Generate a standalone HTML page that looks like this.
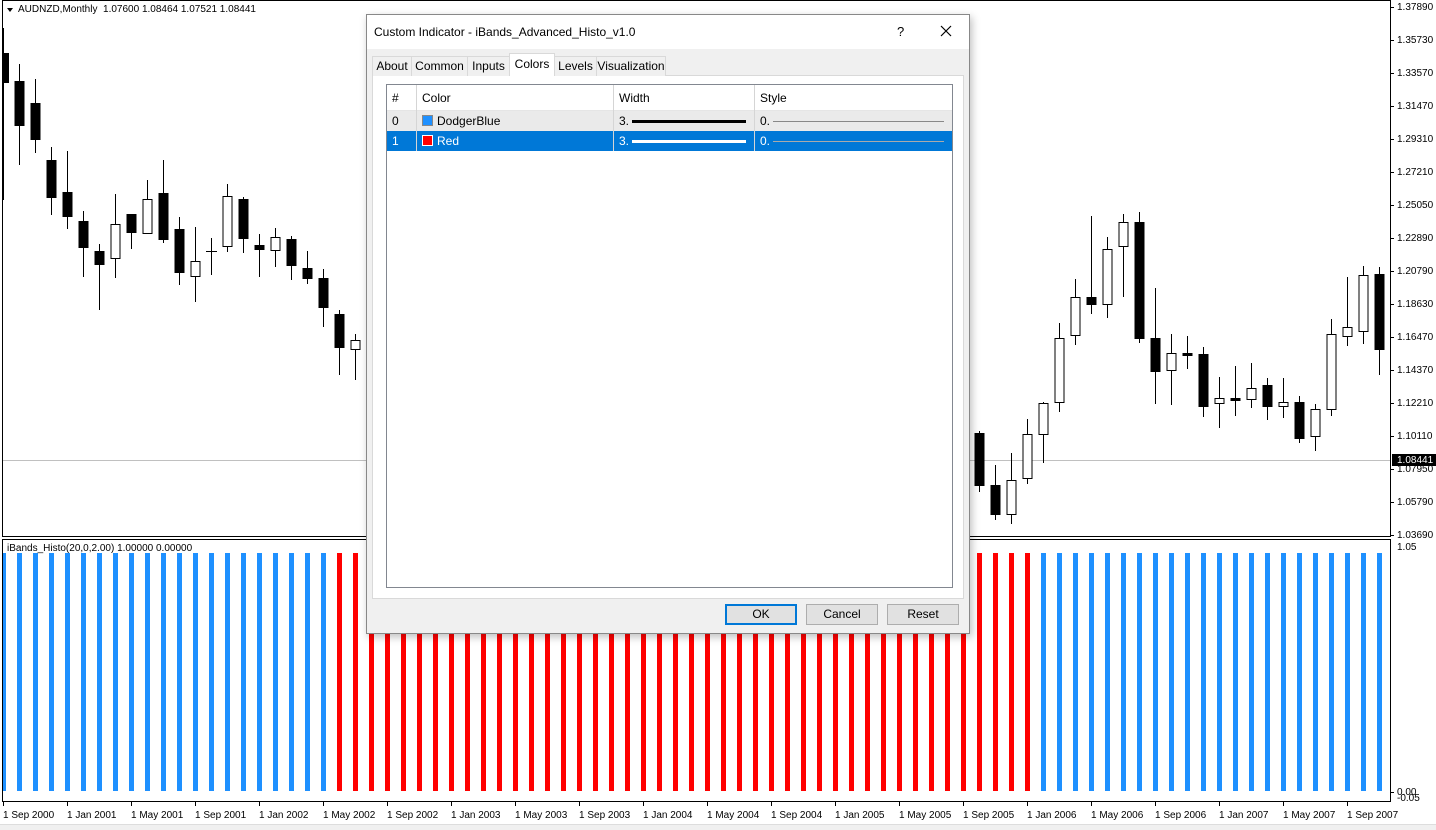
<!DOCTYPE html>
<html><head><meta charset="utf-8"><style>
*{margin:0;padding:0;box-sizing:border-box}
body{width:1436px;height:830px;background:#fff;position:relative;overflow:hidden;font-family:"Liberation Sans",sans-serif;font-size:11px;color:#000}
.ax{position:absolute;left:1397px;font-size:10px;line-height:11px}
.dt{position:absolute;top:810px;font-size:10px;white-space:nowrap}
#dlg{position:absolute;left:366px;top:14px;width:604px;height:620px;background:#f0f0f0;border:1px solid #888;box-shadow:2px 3px 8px rgba(0,0,0,.25);font-size:12px}
#title{position:absolute;left:0;top:0;width:602px;height:34px;background:#fff}
.tab{position:absolute;top:41px;height:20px;border:1px solid #d9d9d9;border-bottom:none;background:#f0f0f0;line-height:19px;text-align:center;font-size:12px;white-space:nowrap;overflow:hidden}
.row{position:absolute;left:0;width:565px;height:20px;line-height:20px}
.cell{position:absolute;top:0;height:20px;padding-left:5px;border-right:1px solid #d5d5d5}
.btn{position:absolute;top:589px;width:72px;height:21px;border:1px solid #adadad;background:#e1e1e1;text-align:center;line-height:19px}
</style></head><body>
<svg width="1436" height="830" style="position:absolute;left:0;top:0">
<defs>
<pattern id="pb" patternUnits="userSpaceOnUse" width="16" height="400"><rect x="1" y="0" width="5" height="400" fill="#1e90ff"/></pattern>
<pattern id="pr" patternUnits="userSpaceOnUse" width="16" height="400"><rect x="1" y="0" width="5" height="400" fill="#ff0000"/></pattern>
</defs>
<rect x="2.5" y="0.5" width="1388" height="536" fill="none" stroke="#000"/>
<rect x="2.5" y="539.5" width="1388" height="262" fill="none" stroke="#000"/>
<line x1="3" y1="460.5" x2="1390" y2="460.5" stroke="#c0c0c0"/>
<rect x="3" y="553" width="333" height="238" fill="url(#pb)"/>
<rect x="336" y="553" width="704" height="238" fill="url(#pr)"/>
<rect x="1040" y="553" width="350" height="238" fill="url(#pb)"/>
<rect x="2" y="28" width="2" height="172" fill="#000"/>
<rect x="3" y="53" width="6" height="30" fill="#000"/>
<path stroke="#000" stroke-width="1" fill="none" d="M19.5 64V165M35.5 79V153M51.5 147V215M67.5 151V229M83.5 211V277M99.5 244V310M115.5 194V278M131.5 214V249M147.5 180V234M163.5 160V243M179.5 217V285M195.5 227V302M211.5 238V275M227.5 184V252M243.5 197V253M259.5 234V277M275.5 228V267M291.5 236V280M307.5 251V284M323.5 269V327M339.5 310V375M355.5 334V380M979.5 431V492M995.5 465V520M1011.5 453V524M1027.5 419V484M1043.5 402V463M1059.5 323V412M1075.5 279V345M1091.5 216V314M1107.5 237V318M1123.5 214V297M1139.5 212V343M1155.5 288V404M1171.5 334V405M1187.5 336V369M1203.5 347V417M1219.5 377V428M1235.5 366V416M1251.5 363V408M1267.5 378V420M1283.5 378V418M1299.5 396V443M1315.5 404V451M1331.5 319V416M1347.5 277V346M1363.5 266V344M1379.5 267V375M206 251.5H217"/>
<g fill="#000">
<rect x="14.5" y="81" width="10" height="45"/><rect x="30.5" y="103" width="10" height="37"/><rect x="46.5" y="160" width="10" height="38"/><rect x="62.5" y="192" width="10" height="25"/><rect x="78.5" y="221" width="10" height="27"/><rect x="94.5" y="251" width="10" height="14"/><rect x="126.5" y="214" width="10" height="19"/><rect x="158.5" y="193" width="10" height="47"/><rect x="174.5" y="229" width="10" height="44"/><rect x="238.5" y="199" width="10" height="40"/><rect x="254.5" y="245" width="10" height="5"/><rect x="286.5" y="239" width="10" height="27"/><rect x="302.5" y="268" width="10" height="11"/><rect x="318.5" y="278" width="10" height="30"/><rect x="334.5" y="314" width="10" height="34"/>
<rect x="974.5" y="433" width="10" height="53"/><rect x="990.5" y="485" width="10" height="30"/><rect x="1086.5" y="297" width="10" height="8"/><rect x="1134.5" y="222" width="10" height="117"/><rect x="1150.5" y="338" width="10" height="34"/><rect x="1182.5" y="353" width="10" height="3"/><rect x="1198.5" y="354" width="10" height="53"/><rect x="1230.5" y="398" width="10" height="3"/><rect x="1262.5" y="385" width="10" height="22"/><rect x="1294.5" y="402" width="10" height="37"/><rect x="1374.5" y="274" width="10" height="76"/>
</g>
<g fill="#fff" stroke="#000" stroke-width="1">
<rect x="111" y="224.5" width="9" height="34"/><rect x="143" y="199.5" width="9" height="34"/><rect x="191" y="261.5" width="9" height="15"/><rect x="223" y="196.5" width="9" height="50"/><rect x="271" y="237.5" width="9" height="13"/><rect x="351" y="340.5" width="9" height="9"/>
<rect x="1007" y="480.5" width="9" height="34"/><rect x="1023" y="434.5" width="9" height="44"/><rect x="1039" y="403.5" width="9" height="31"/><rect x="1055" y="338.5" width="9" height="64"/><rect x="1071" y="297.5" width="9" height="38"/><rect x="1103" y="249.5" width="9" height="55"/><rect x="1119" y="222.5" width="9" height="24"/><rect x="1167" y="353.5" width="9" height="17"/><rect x="1215" y="398.5" width="9" height="5"/><rect x="1247" y="388.5" width="9" height="11"/><rect x="1279" y="402.5" width="9" height="4"/><rect x="1311" y="409.5" width="9" height="27"/><rect x="1327" y="334.5" width="9" height="75"/><rect x="1343" y="327.5" width="9" height="9"/><rect x="1359" y="275.5" width="9" height="56"/>
</g>
<path stroke="#000" d="M1391 7.5h3M1391 40.5h3M1391 73.5h3M1391 106.5h3M1391 139.5h3M1391 172.5h3M1391 205.5h3M1391 238.5h3M1391 271.5h3M1391 304.5h3M1391 337.5h3M1391 370.5h3M1391 403.5h3M1391 436.5h3M1391 469.5h3M1391 502.5h3M1391 535.5h3M1391 792.5h3"/>
<rect x="1392" y="454" width="44" height="12" fill="#000"/>
<path stroke="#000" d="M3.5 802v4M67.5 802v4M131.5 802v4M195.5 802v4M259.5 802v4M323.5 802v4M387.5 802v4M451.5 802v4M515.5 802v4M579.5 802v4M643.5 802v4M707.5 802v4M771.5 802v4M835.5 802v4M899.5 802v4M963.5 802v4M1027.5 802v4M1091.5 802v4M1155.5 802v4M1219.5 802v4M1283.5 802v4M1347.5 802v4"/>
<path d="M7 8h6l-3 4z" fill="#000"/>
</svg>
<div style="position:absolute;left:18px;top:4px;font-size:10px">AUDNZD,Monthly &nbsp;1.07600 1.08464 1.07521 1.08441</div>
<div style="position:absolute;left:7px;top:543px;font-size:10px">iBands_Histo(20,0,2.00) 1.00000 0.00000</div>
<div class="ax" style="top:2px">1.37890</div><div class="ax" style="top:35px">1.35730</div><div class="ax" style="top:68px">1.33570</div><div class="ax" style="top:101px">1.31470</div><div class="ax" style="top:134px">1.29310</div><div class="ax" style="top:167px">1.27210</div><div class="ax" style="top:200px">1.25050</div><div class="ax" style="top:233px">1.22890</div><div class="ax" style="top:266px">1.20790</div><div class="ax" style="top:299px">1.18630</div><div class="ax" style="top:332px">1.16470</div><div class="ax" style="top:365px">1.14370</div><div class="ax" style="top:398px">1.12210</div><div class="ax" style="top:431px">1.10110</div><div class="ax" style="top:464px">1.07950</div><div class="ax" style="top:497px">1.05790</div><div class="ax" style="top:530px">1.03690</div>
<div class="ax" style="top:455px;color:#fff">1.08441</div>
<div class="ax" style="top:542px">1.05</div><div class="ax" style="top:787px">0.00</div><div class="ax" style="top:793px">-0.05</div>
<div class="dt" style="left:3px">1 Sep 2000</div><div class="dt" style="left:67px">1 Jan 2001</div><div class="dt" style="left:131px">1 May 2001</div><div class="dt" style="left:195px">1 Sep 2001</div><div class="dt" style="left:259px">1 Jan 2002</div><div class="dt" style="left:323px">1 May 2002</div><div class="dt" style="left:387px">1 Sep 2002</div><div class="dt" style="left:451px">1 Jan 2003</div><div class="dt" style="left:515px">1 May 2003</div><div class="dt" style="left:579px">1 Sep 2003</div><div class="dt" style="left:643px">1 Jan 2004</div><div class="dt" style="left:707px">1 May 2004</div><div class="dt" style="left:771px">1 Sep 2004</div><div class="dt" style="left:835px">1 Jan 2005</div><div class="dt" style="left:899px">1 May 2005</div><div class="dt" style="left:963px">1 Sep 2005</div><div class="dt" style="left:1027px">1 Jan 2006</div><div class="dt" style="left:1091px">1 May 2006</div><div class="dt" style="left:1155px">1 Sep 2006</div><div class="dt" style="left:1219px">1 Jan 2007</div><div class="dt" style="left:1283px">1 May 2007</div><div class="dt" style="left:1347px">1 Sep 2007</div>
<div style="position:absolute;left:0;top:824px;width:1436px;height:6px;background:#f0f0f0;border-top:1px solid #ddd"></div>

<div id="dlg">
<div id="title"><span style="position:absolute;left:7px;top:10px">Custom Indicator - iBands_Advanced_Histo_v1.0</span>
<span style="position:absolute;left:530px;top:9px;font-size:13px">?</span>
<svg style="position:absolute;left:573px;top:10px" width="12" height="12"><path d="M1 1L11 11M11 1L1 11" stroke="#000" stroke-width="1.2"/></svg></div>
<div style="position:absolute;left:5px;top:60px;width:592px;height:524px;background:#fff;border:1px solid #d9d9d9"></div>
<div class="tab" style="left:5px;width:40px">About</div>
<div class="tab" style="left:44px;width:57px">Common</div>
<div class="tab" style="left:100px;width:43px">Inputs</div>
<div class="tab" style="left:187px;width:43px">Levels</div>
<div class="tab" style="left:229px;width:70px">Visualization</div>
<div class="tab" style="left:142px;top:38px;width:46px;height:23px;background:#fff;line-height:21px">Colors</div>
<div style="position:absolute;left:19px;top:69px;width:567px;height:504px;border:1px solid #828790;background:#fff">
<div class="row" style="top:0;height:26px;line-height:26px;border-bottom:1px solid #e5e5e5">
<div class="cell" style="left:0;width:30px;height:26px">#</div><div class="cell" style="left:30px;width:197px;height:26px">Color</div><div class="cell" style="left:227px;width:141px;height:26px">Width</div><div class="cell" style="left:368px;width:197px;height:26px;border:none">Style</div></div>
<div class="row" style="top:26px;background:#eaeaea">
<div class="cell" style="left:0;width:30px">0</div><div class="cell" style="left:30px;width:197px"><span style="display:inline-block;width:11px;height:11px;background:#1e90ff;border:1px solid #888;vertical-align:-1px;margin-right:4px"></span>DodgerBlue</div><div class="cell" style="left:227px;width:141px">3.<span style="position:absolute;left:18px;top:9px;width:114px;height:3px;background:#000"></span></div><div class="cell" style="left:368px;width:197px;border:none">0.<span style="position:absolute;left:18px;top:10px;width:171px;height:1px;background:#888"></span></div></div>
<div class="row" style="top:46px;background:#0078d7;color:#fff">
<div class="cell" style="left:0;width:30px">1</div><div class="cell" style="left:30px;width:197px"><span style="display:inline-block;width:11px;height:11px;background:#f00;border:1px solid #fff;vertical-align:-1px;margin-right:4px"></span>Red</div><div class="cell" style="left:227px;width:141px">3.<span style="position:absolute;left:18px;top:9px;width:114px;height:3px;background:#fff"></span></div><div class="cell" style="left:368px;width:197px;border:none">0.<span style="position:absolute;left:18px;top:10px;width:171px;height:1px;background:#aaa"></span></div></div>
</div>
<div class="btn" style="left:358px;border:2px solid #0078d7;line-height:17px">OK</div>
<div class="btn" style="left:439px">Cancel</div>
<div class="btn" style="left:520px">Reset</div>
</div>
</body></html>
